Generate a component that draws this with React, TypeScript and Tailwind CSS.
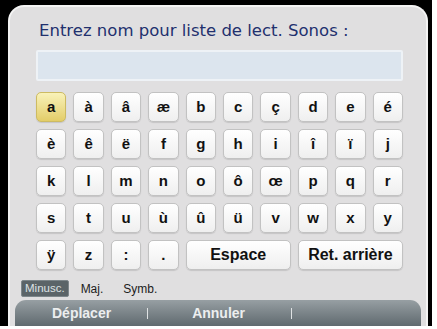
import React from 'react';

const rows: string[][] = [
  ['a', 'à', 'â', 'æ', 'b', 'c', 'ç', 'd', 'e', 'é'],
  ['è', 'ê', 'ë', 'f', 'g', 'h', 'i', 'î', 'ï', 'j'],
  ['k', 'l', 'm', 'n', 'o', 'ô', 'œ', 'p', 'q', 'r'],
  ['s', 't', 'u', 'ù', 'û', 'ü', 'v', 'w', 'x', 'y'],
  ['ÿ', 'z', ':', '.'],
];

const keyBase =
  'h-[30px] flex items-center justify-center rounded-[5px] border border-[#c2c2c2] text-[#111] font-bold shadow-[0_1px_1px_rgba(0,0,0,0.12)]';
const keyIdle = 'bg-gradient-to-b from-[#ffffff] to-[#efefef]';
const keyActive = 'bg-gradient-to-b from-[#f9f2b8] to-[#e3cd68] border-[#cdbb62]';

const Key: React.FC<{ label: string; active?: boolean; wide?: boolean }> = ({ label, active, wide }) => (
  <div
    className={`${keyBase} ${active ? keyActive : keyIdle} ${wide ? 'col-span-3 text-[16px]' : 'text-[15px]'}`}
    style={{ fontFamily: '"Liberation Sans", Arial, sans-serif' }}
  >
    {label}
  </div>
);

export default function App() {
  return (
    <div className="w-[437px] h-[329px] bg-white">
      <div className="w-[432px] h-[326px] bg-black pl-[8px] pt-[5px] pr-[4px]">
        <div className="h-full flex flex-col bg-[#e0dfe0] border-2 border-b-0 border-[#f4f4f4] rounded-t-[16px]">
          <div
            className="mt-[14px] ml-[29px] h-[20px] leading-[20px] text-[16.5px] text-[#22306e] whitespace-nowrap"
            style={{ fontFamily: '"DejaVu Sans", Verdana, sans-serif' }}
          >
            Entrez nom pour liste de lect. Sonos :
          </div>

          <div className="pl-[26px] pr-[23px]">
            <div className="mt-[9px] h-[31px] bg-[#dce5ee] border-2 border-[#eef2f6] rounded-[2px]" />

            <div className="mt-[11px] grid grid-cols-10 gap-x-[7px] gap-y-[7px]">
              {rows.map((row, ri) =>
                row.map((k, ki) => <Key key={`${ri}-${ki}`} label={k} active={ri === 0 && ki === 0} />)
              )}
              <Key label="Espace" wide />
              <Key label="Ret. arrière" wide />
            </div>
          </div>

          <div
            className="mt-[10px] h-[17px] flex items-center text-[12px] text-[#1c1c1c]"
            style={{ fontFamily: '"Liberation Sans", Arial, sans-serif' }}
          >
            <span className="ml-[11px] h-[17px] px-[3px] flex items-center text-[11.5px] bg-[#5b6468] text-[#dde2e4] border border-[#7d868a] rounded-[2px]">
              Minusc.
            </span>
            <span className="ml-[12px]">Maj.</span>
            <span className="ml-[20px]">Symb.</span>
          </div>

          <div
            className="mt-[3px] mx-[5px] flex-1 flex items-center rounded-t-[11px] bg-gradient-to-b from-[#979fa3] to-[#606a6f] text-[14px] font-bold text-[#eceeef]"
            style={{ fontFamily: '"Liberation Sans", Arial, sans-serif' }}
          >
            <span className="ml-[37px]">Déplacer</span>
            <span className="ml-[36px] w-px h-[11px] bg-[#dfe2e3]" />
            <span className="ml-[44px]">Annuler</span>
            <span className="ml-[46px] w-px h-[11px] bg-[#dfe2e3]" />
          </div>
        </div>
      </div>
    </div>
  );
}
